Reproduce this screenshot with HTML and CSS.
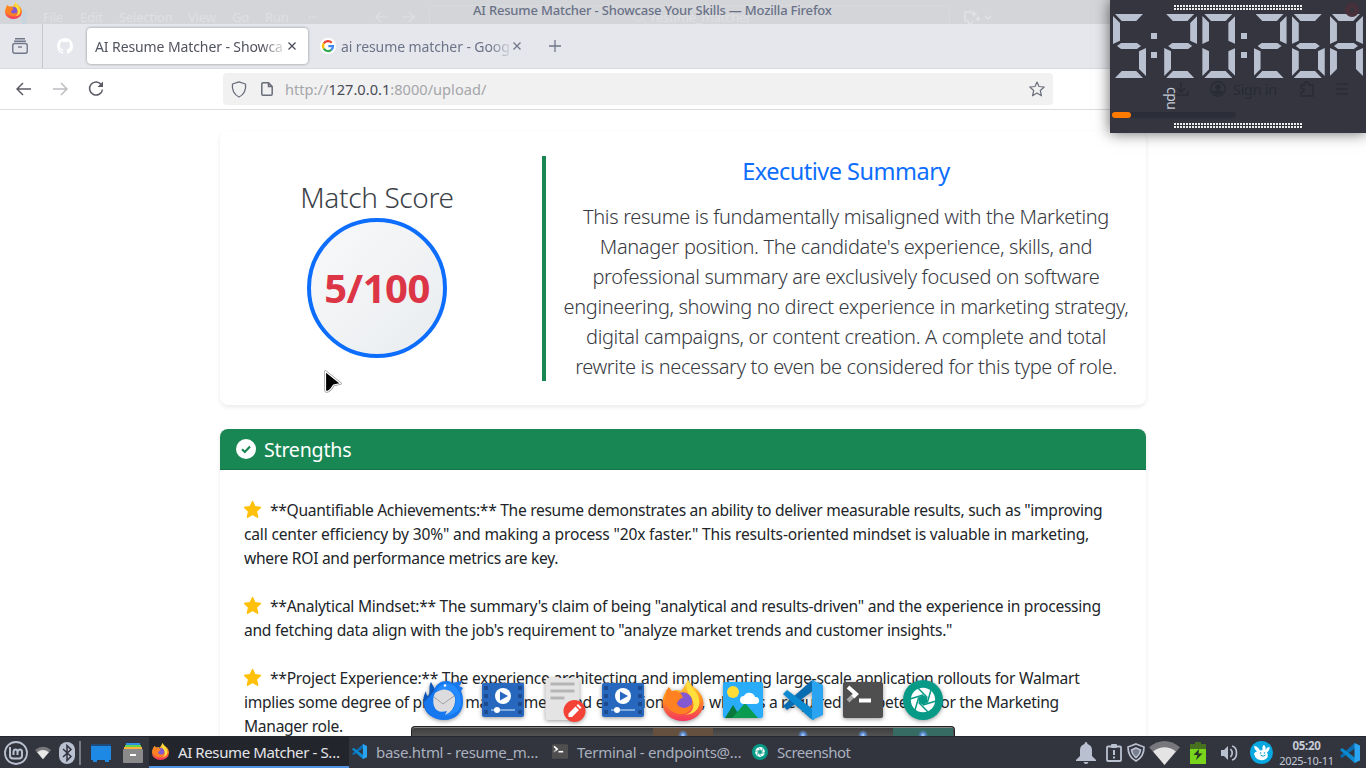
FILE: index.html
```
<!DOCTYPE html>
<html lang="en">
<head>
<meta charset="utf-8">
<title>AI Resume Matcher - Showcase Your Skills</title>
<link rel="stylesheet" href="styles.css">
</head>
<body>
<svg class="defs" width="0" height="0">
  <defs>
    <linearGradient id="fx" x1="0" y1="0" x2="0" y2="1"><stop offset="0" stop-color="#ffde3a"/><stop offset=".5" stop-color="#ff8a20"/><stop offset="1" stop-color="#f43460"/></linearGradient>
    <symbol id="firefox" viewBox="0 0 40 40">
      <path d="M25 0C27 4 29 6 32 8C37 12 40 17 40 23A20 17 0 0 1 0 23C0 17 2 13 4 10C5 9 6 8 6 7C8 8 8 9 9 11C12 10 15 9 18 11C20 9 22 5 25 0Z" fill="url(#fx)"/>
      <path d="M25 0C25 7 35 10 36 20C37 28 30 34 22 34C31 32 32 23 28 17C24 12 22 8 25 0Z" fill="#ffdf3d"/>
      <circle cx="20" cy="21" r="9" fill="#8458d0"/>
      <path d="M4 10L6 7L9 11C14 10 18 12 20 17C17 18 15 20 14 23C16 28 23 29 28 24C28 31 22 35 15 33C5 30 0 23 4 10Z" fill="#ff8122"/>
    </symbol>
    <symbol id="vscode" viewBox="0 0 40 40">
      <path d="M0 26L4 30L31 10V0L28 1Z" fill="#0a6cb0"/>
      <path d="M0 14L4 10L31 30V40L28 39Z" fill="#0b8ad2"/>
      <path d="M29 0L40 5V35L29 40Z" fill="#2aa4f0"/>
    </symbol>
    <symbol id="term" viewBox="0 0 40 36">
      <rect width="40" height="36" rx="2" fill="#4f4f4f"/>
      <path d="M5 19L12 12" stroke="#aaa" stroke-width="4"/>
      <path d="M5 5L13 12L10 15" stroke="#fff" stroke-width="4" fill="none"/>
      <path d="M16 18.500H28" stroke="#fff" stroke-width="4"/>
    </symbol>
    <symbol id="shot" viewBox="0 0 40 40">
      <circle cx="20" cy="20" r="20" fill="#079a87"/>
      <circle cx="20" cy="20" r="12.200" fill="#fff"/>
      <path d="M20 15L24.300 17.500V22.500L20 25L15.700 22.500V17.500Z" fill="#079a87"/>
      <path d="M24.300 17.500L15 8M24.300 22.500L28 10M20 25L33 21M15.700 22.500L25 32M15.700 17.500L12 30M20 15L7 19" stroke="#079a87" stroke-width="1.500"/>
    </symbol>
    <symbol id="video" viewBox="0 0 42 34">
      <rect width="42" height="34" rx="2" fill="#2768be"/>
      <path d="M4 3V33M38 3V33" stroke="#1c4c8f" stroke-width="4" stroke-dasharray="4 4"/>
      <circle cx="21" cy="13" r="8" fill="#fff"/>
      <path d="M18 8.500L26 13L18 17.500Z" fill="#2768be"/>
      <path d="M9 27H33" stroke="#9fc0e8" stroke-width="1.500"/><circle cx="15" cy="27" r="3" fill="#fff"/>
    </symbol>
    <symbol id="star" viewBox="0 0 16 16"><path d="M8 .2L10.300 5.200L16 5.900L11.800 9.700L13 15.500L8 12.700L3 15.500L4.200 9.700L0 5.900L5.700 5.200Z" stroke="#ffc107" stroke-linejoin="round" fill="#ffc107"/></symbol>
    <symbol id="back" viewBox="0 0 16 14"><path d="M1 7H15M7 1L1 7L7 13" fill="none" stroke="currentColor" stroke-width="1.500"/></symbol>
  </defs>
</svg>

<div class="desktop">
  <header class="titlebar">
    <div class="ghost">
      <span class="gm g1">File</span><span class="gm g2">Edit</span><span class="gm g3">Selection</span><span class="gm g4">View</span><span class="gm g5">Go</span><span class="gm g6">Run</span><span class="gm g7">···</span>
      <svg class="garrows" width="40" height="12" viewBox="0 0 40 12"><path d="M1 6H13M6 1L1 6L6 11M27 6H39M34 1L39 6L34 11" fill="none" stroke="#e0e0e3" stroke-width="1.200"/></svg>
      <span class="gbox"></span>
      <svg class="gsearch" width="14" height="14" viewBox="0 0 14 14"><circle cx="5.500" cy="5.500" r="4.500" fill="none" stroke="#dddee1"/><path d="M9 9L13 13" stroke="#dddee1"/></svg>
      <span class="gm g8">resume_matcher</span>
      <svg class="gcop" width="30" height="15" viewBox="0 0 30 15"><path d="M8 2H1V11H4L5 15L9 11M21 6L24 9L27 6" fill="none" stroke="#e1e2e5" stroke-width="1.500"/><path d="M10 0L11 3L14 4L11 5L10 8L9 5L6 4L9 3ZM14 6L15 8L17 9L15 10L14 12L13 10L11 9L13 8Z" fill="#e1e2e5"/></svg>
      <svg class="gcode" width="17" height="16" viewBox="0 0 40 40"><path d="M29 0L40 5V35L29 40V12L4 30L0 26" fill="#c6d4e0"/></svg>
    </div>
    <svg class="tfox" width="17" height="17"><use href="#firefox"/></svg>
    <span class="wtitle">AI Resume Matcher - Showcase Your Skills — Mozilla Firefox</span>
  </header>

  <nav class="tabs">
    <div class="tabview"><svg width="16" height="16" viewBox="0 0 16 16" fill="none" stroke="#70778b" stroke-width="1.400"><path d="M3 .8H13M2 3.200H14"/><rect x=".8" y="5.500" width="14.400" height="9.700" rx="1.800"/><path d="M6 9H10"/></svg></div>
    <div class="pinned"><svg width="16" height="16" viewBox="0 0 16 16" fill="#fff"><path d="M8 0C3.580 0 0 3.580 0 8c0 3.540 2.290 6.530 5.470 7.590.4.070.55-.17.55-.38 0-.19-.01-.82-.01-1.490-2.010.37-2.530-.49-2.690-.94-.09-.23-.48-.94-.82-1.130-.28-.15-.68-.52-.01-.53.630-.01 1.080.58 1.230.82.720 1.210 1.870.87 2.330.66.070-.52.280-.87.510-1.070-1.780-.2-3.640-.89-3.640-3.950 0-.87.310-1.590.82-2.150-.08-.2-.36-1.020.08-2.120 0 0 .67-.21 2.200.82a7.600 7.600 0 0 1 4 0c1.530-1.040 2.200-.82 2.200-.82.440 1.100.16 1.920.08 2.120.51.560.82 1.270.82 2.150 0 3.070-1.870 3.750-3.650 3.950.29.250.54.730.54 1.480 0 1.070-.01 1.930-.01 2.200 0 .21.150.46.550.38A8 8 0 0 0 16 8c0-4.420-3.580-8-8-8z"/></svg></div>
    <div class="tab active"><span class="tt">AI Resume Matcher - Showca</span><svg width="8" height="8" viewBox="0 0 8 8"><path d="M.5 .5L7.500 7.500M7.500 .5L.5 7.500" stroke="#494d5a" stroke-width="1.300"/></svg></div>
    <div class="tab"><svg class="goog" width="16" height="16" viewBox="0 0 16 16"><circle cx="8" cy="8" r="8" fill="#fff"/><g fill="none" stroke-width="2.200"><path d="M11.700 4.700A5 5 0 0 0 3.800 5.300" stroke="#ea4335"/><path d="M3.800 5.300A5 5 0 0 0 3.800 10.700" stroke="#fbbc05"/><path d="M3.800 10.700A5 5 0 0 0 11.300 11.800" stroke="#34a853"/><path d="M11.300 11.800A5 5 0 0 0 13 8.200H8.300" stroke="#4285f4"/></g></svg><span class="tt t2">ai resume matcher - Goog</span><svg width="8" height="8" viewBox="0 0 8 8"><path d="M.5 .5L7.500 7.500M7.500 .5L.5 7.500" stroke="#70778b" stroke-width="1.300"/></svg></div>
    <svg class="plus" width="12" height="12" viewBox="0 0 12 12"><path d="M6 0V12M0 6H12" stroke="#70778b" stroke-width="1.300"/></svg>
  </nav>

  <div class="navbar">
    <svg class="nb" width="16" height="14"><use href="#back"/></svg>
    <svg class="nf" width="16" height="14"><use href="#back"/></svg>
    <svg class="nr" width="16" height="16" viewBox="0 0 16 16"><path d="M13.500 4A6.500 6.500 0 1 0 14.500 8.500" fill="none" stroke="#5b5b66" stroke-width="1.500"/><path d="M15 .5V6H9.500Z" fill="#5b5b66"/></svg>
    <div class="url">
      <svg width="16" height="17" viewBox="0 0 16 17" fill="none" stroke="#696d7b" stroke-width="1.300"><path d="M8 .8L14.500 3C15.500 9 12.500 14 8 16C3.500 14 .5 9 1.500 3Z" stroke-linejoin="round"/></svg>
      <svg class="page" width="12" height="14" viewBox="0 0 12 14"><path d="M.8 2Q.8 .8 2 .8H7.500L11.200 4.500V12Q11.200 13.200 10 13.200H2Q.8 13.200 .8 12ZM7.500 .8V4.500H11.200" fill="none" stroke="#696d7b" stroke-width="1.500"/></svg>
      <span class="addr">http://<b>127.0.0.1</b>:8000/upload/</span>
      <svg class="fav" width="16" height="16" viewBox="0 0 16 16"><path d="M8 1L10 5.500L15.200 6L11.300 9.500L12.500 14.800L8 12L3.500 14.800L4.700 9.500L.8 6L6 5.500Z" fill="none" stroke="#6c6f7c" stroke-width="1.200" stroke-linejoin="round"/></svg>
    </div>
  </div>

  <main class="content">
    <section class="card score">
      <div class="left"><h3>Match Score</h3><div class="ring">5/100</div></div>
      <div class="right">
        <h4>Executive Summary</h4>
        <p><span class="s1">This resume is fundamentally misaligned with the Marketing</span><span class="s2">Manager position. The candidate's experience, skills, and</span><span class="s3">professional summary are exclusively focused on software</span><span class="s4">engineering, showing no direct experience in marketing strategy,</span><span class="s5">digital campaigns, or content creation. A complete and total</span><span class="s6">rewrite is necessary to even be considered for this type of role.</span></p>
      </div>
    </section>
    <section class="card strengths">
      <h5><svg width="20" height="20" viewBox="0 0 20 20"><circle cx="10" cy="10" r="10" fill="#fff"/><path d="M6 10.200L8.800 13L14 7.500" fill="none" stroke="#198754" stroke-width="2.200"/></svg>Strengths</h5>
      <ul>
        <li><span><svg width="17" height="17"><use href="#star"/></svg>**Quantifiable Achievements:** The resume demonstrates an ability to deliver measurable results, such as "improving</span><span class="wide">call center efficiency by 30%" and making a process "20x faster." This results-oriented mindset is valuable in marketing,</span><span>where ROI and performance metrics are key.</span></li>
        <li><span class="mid"><svg width="17" height="17"><use href="#star"/></svg>**Analytical Mindset:** The summary's claim of being "analytical and results-driven" and the experience in processing</span><span class="mid">and fetching data align with the job's requirement to "analyze market trends and customer insights."</span></li>
        <li><span class="proj"><svg width="17" height="17"><use href="#star"/></svg>**Project Experience:** The experience architecting and implementing large-scale application rollouts for Walmart</span><span>implies some degree of project management and execution skills, which is a required competency for the Marketing</span><span>Manager role.</span></li>
      </ul>
    </section>
  </main>

  <footer class="taskbar">
    <svg class="mint" width="24" height="24" viewBox="0 0 24 24" fill="none" stroke="#b9c1d0"><circle cx="12" cy="12" r="11" stroke-width="1.800"/><path d="M6 6V14.500Q6 17.500 9 17.500H15Q18 17.500 18 14.500V11Q18 8.500 16 8.500T13.500 11V14M13.500 11Q13.500 8.500 11.500 8.500T9.500 11V14" stroke-width="2"/></svg>
    <svg class="wifi1" width="16" height="14" viewBox="0 0 30 23"><path d="M0 6Q15 -6 30 6L15 23Z" fill="#77777c"/><path d="M4 10Q15 2 26 10L15 23Z" fill="#e8e8e8"/></svg>
    <svg class="bt" width="16" height="22" viewBox="0 0 16 22"><rect width="16" height="22" rx="8" fill="#b9c1d0"/><path d="M4 7L12 14.500L8 18.500V3.500L12 7.500L4 15" fill="none" stroke="#30323d" stroke-width="1.500"/></svg>
    <span class="sep"></span>
    <svg class="desk" width="20" height="18" viewBox="0 0 20 18"><path d="M0 0H20V16H18V18H14V16H6V18H2V16H0Z" fill="#1e88e5"/><path d="M0 0H20V2H0Z" fill="#1d4b7c"/></svg>
    <svg class="files" width="20" height="20" viewBox="0 0 20 20"><path d="M3 0H17V2H3Z" fill="#2f8fe6"/><path d="M2 2H18V4H2Z" fill="#5fd44e"/><path d="M1 4H19V6H1Z" fill="#ffb13b"/><rect y="6" width="20" height="14" rx="1" fill="#8a8a8a"/><path d="M7 12H13" stroke="#fff" stroke-width="2"/></svg>
    <div class="task on"><svg width="17" height="17"><use href="#firefox"/></svg><span>AI Resume Matcher - S…</span></div>
    <div class="task"><svg width="15" height="15"><use href="#vscode"/></svg><span class="k2">base.html - resume_m…</span></div>
    <div class="task"><svg width="16" height="15"><use href="#term"/></svg><span class="k3">Terminal - endpoints@…</span></div>
    <div class="task"><svg width="16" height="16"><use href="#shot"/></svg><span class="k4">Screenshot</span></div>
    <div class="tray">
      <svg class="bell" width="22" height="22" viewBox="0 0 22 22"><path d="M11 0Q12.500 0 12.500 2Q17 3.500 17 8V14L21 18V19H1V18L5 14V8Q5 3.500 9.500 2Q9.500 0 11 0ZM8.500 20H13.500Q13 22 11 22T8.500 20Z" fill="#b9c1d0"/></svg>
      <svg class="clip" width="16" height="18" viewBox="0 0 16 18"><rect x="1" y="2.500" width="14" height="14.500" rx="1" fill="none" stroke="#b9c1d0" stroke-width="1.800"/><rect x="5" width="6" height="4" rx="1" fill="#b9c1d0"/><path d="M8 6V11M8 12.500V14.500" stroke="#b9c1d0" stroke-width="2"/></svg>
      <svg class="shield" width="18" height="19" viewBox="0 0 18 19" fill="none" stroke="#b9c1d0" stroke-width="1.700"><path d="M9 1L17 4Q17 14 9 18Q1 14 1 4Z"/><path d="M9 5L13.500 7Q13 11.500 9 14.500Q5 11.500 4.500 7Z" fill="#777f8e"/></svg>
      <svg class="wifi2" width="31" height="24" viewBox="0 0 30 23"><path d="M0 6Q15 -6 30 6L15 23Z" fill="#77777c"/><path d="M4 10Q15 2 26 10L15 23Z" fill="#e4e4e4"/></svg>
      <svg class="batt" width="16" height="22" viewBox="0 0 16 22"><path d="M5 0H11V2H16V22H0V2H5Z" fill="#477021"/><path d="M0 7H16V22H0Z" fill="#78d51b"/><path d="M9 7L3.500 13H7.500L6 18L12.500 11.500H8.500Z" fill="#273324"/></svg>
      <svg class="vol" width="17" height="16" viewBox="0 0 17 16"><path d="M0 5H3L7 1V15L3 11H0Z" fill="#b9c1d0"/><path d="M9.500 4Q13 8 9.500 12M11 1Q15.500 2 15.500 8T11 15" fill="none" stroke="#b9c1d0" stroke-width="1.700"/></svg>
      <svg class="bun" width="23" height="23" viewBox="0 0 23 23"><circle cx="11.500" cy="11.500" r="11.500" fill="#08a7df"/><path d="M4 5Q8 5 10 9.500L12.500 9Q12 4.500 14 4Q16 5 15.500 9Q17 5.500 19.500 6Q20 9 17 11.500Q19 15 16.500 17.500Q14 20 10 19Q5 18 4 12.500Q5 11 7 10.500Q4 8 4 5Z" fill="#fff"/><path d="M10.500 14Q13 16.500 15.500 14" stroke="#08a7df" fill="none"/><circle cx="10.500" cy="12" r=".8" fill="#08a7df"/><circle cx="14.500" cy="12" r=".8" fill="#08a7df"/></svg>
      <div class="clock"><b>05:20</b><span>2025-10-11</span></div>
      <svg class="tcode" width="20" height="20"><use href="#vscode"/></svg>
    </div>
  </footer>

  <div class="dock">
    <div class="icons">
      <svg width="40" height="40" viewBox="0 0 40 40"><path d="M8 2C5 7 8 12 5 16Q3 15 3 11C-2 20 0 31 8 36L18 20Z" fill="#0d57b8"/><path d="M11 11C13 1 25-1 29 3L39 1Q38 5 36 6L40 8L38 11Q40 15 40 22C40 32 33 40 21 40C10 40 1 33 1 22L7 16Z" fill="#1677ef"/><path d="M13 11Q19 0 30 5Q38 10 38 22Q38 34 22 36Q30 32 32 25Q35 14 27 11Q20 8 13 11Z" fill="#248aff"/><path d="M12 13Q20 7 27 11Q33 15 32 22Q31 31 22 35L24 31Q14 34 11 26Q9 19 12 13Z" fill="#dcdcde"/><path d="M11 17L20 24L31 16" fill="none" stroke="#a0a0a4" stroke-width="1"/><circle cx="22" cy="5.500" r="1.300" fill="#fff"/></svg>
      <svg width="42" height="34"><use href="#video"/></svg>
      <svg class="edit" width="40" height="44" viewBox="0 0 40 44"><rect width="34" height="42" rx="2" fill="#e4e4e4"/><path d="M5 6H29M5 13H29M5 20H19" stroke="#b5b5b5" stroke-width="3"/><circle cx="29" cy="33" r="11" fill="#f44336"/><path d="M23 39V35.500L30 28.500L33.500 32L26.500 39ZM31 27.500L32.500 26L36 29.500L34.500 31Z" fill="#fff"/></svg>
      <svg width="42" height="34"><use href="#video"/></svg>
      <svg width="41" height="41"><use href="#firefox"/></svg>
      <svg width="40" height="36" viewBox="0 0 40 36"><rect width="40" height="36" rx="2" fill="#29adfa"/><circle cx="10" cy="10" r="6" fill="#fddc36"/><path d="M2 36L10 23L18 36Z" fill="#08783e"/><path d="M9 36L22 21L35 36Z" fill="#0b9c51"/><path d="M21 22A4 4 0 0 1 21 14A6 6 0 0 1 32 15A3.500 3.500 0 0 1 33 22Z" fill="#fff"/></svg>
      <svg width="40" height="40"><use href="#vscode"/></svg>
      <svg width="40" height="36"><use href="#term"/></svg>
      <svg width="40" height="40"><use href="#shot"/></svg>
    </div>
    <div class="shelf"><i class="o"></i><i></i><i></i><i></i><i class="g"></i></div>
  </div>

  <aside class="widget">
    <div class="dots"></div>
    <div class="led" aria-label="5:20:26A">
      <div class="dg"><i class="a"></i><i class="f"></i><i class="g"></i><i class="c"></i><i class="d"></i></div>
      <div class="cl"></div>
      <div class="dg"><i class="a"></i><i class="b"></i><i class="g"></i><i class="e"></i><i class="d"></i></div>
      <div class="dg"><i class="a"></i><i class="b"></i><i class="c"></i><i class="d"></i><i class="e"></i><i class="f"></i></div>
      <div class="cl"></div>
      <div class="dg"><i class="a"></i><i class="b"></i><i class="g"></i><i class="e"></i><i class="d"></i></div>
      <div class="dg"><i class="a"></i><i class="c"></i><i class="d"></i><i class="e"></i><i class="f"></i><i class="g"></i></div>
      <div class="dg"><i class="a"></i><i class="b"></i><i class="c"></i><i class="e"></i><i class="f"></i><i class="g"></i></div>
    </div>
    <div class="under">
      <svg width="16" height="16" viewBox="0 0 16 16" fill="none" stroke="#282a33" stroke-width="1.500"><path d="M8 1V11M4 7L8 11L12 7M1 10V14H15V10"/></svg>
      <svg class="usr" width="16" height="16" viewBox="0 0 16 16" fill="none" stroke="#282a33" stroke-width="1.500"><circle cx="8" cy="8" r="7.200"/><circle cx="8" cy="6" r="2" fill="#282a33"/><path d="M4 11Q8 9 12 11Q8 15 4 11Z" fill="#282a33"/></svg>
      <span>Sign in</span>
      <svg class="ext" width="14" height="16" viewBox="0 0 14 16" fill="none" stroke="#282a33" stroke-width="1.500"><path d="M1 4H4Q4 1 6.500 1T9 4H13V15H1V11Q4 11 4 9T1 7Z"/></svg>
      <svg class="ham" width="12" height="12" viewBox="0 0 12 12"><path d="M0 1H12M0 6H12M0 11H12" stroke="#282a33" stroke-width="1.300"/></svg>
    </div>
    <span class="cpu">cpu</span>
    <div class="meter"><i></i></div>
    <div class="dots low"></div>
    <svg class="xx" width="14" height="14" viewBox="0 0 14 14"><circle cx="7" cy="7" r="7" fill="#4a303b"/><path d="M4.500 4.500L9.500 9.500M9.500 4.500L4.500 9.500" stroke="#34353f" stroke-width="1.500"/></svg>
  </aside>

  <svg class="cursor" width="18" height="24" viewBox="0 0 18 24"><path d="M1.500 1.500L16.500 13.500L9.500 15Q6 21 2.500 21.500Q1.500 21 1.500 20Z" fill="#000" stroke="#999" stroke-width="2.600" stroke-linejoin="round"/><path d="M1.500 1.500L16.500 13.500L9.500 15Q6 21 2.500 21.500Q1.500 21 1.500 20Z" fill="#000" stroke="#fff" stroke-width="1.200" stroke-linejoin="round"/></svg>
</div>
</body>
</html>
```
FILE: styles.css
```
* { box-sizing: border-box; }
body { margin: 0; font-family: "Noto Sans", sans-serif; overflow: hidden; background: #fff; }
svg { display: block; flex: none; }
.defs { position: absolute; }
.desktop { position: relative; width: 1366px; height: 768px; overflow: hidden; display: flex; flex-direction: column; }

.titlebar { position: relative; flex: none; height: 24px; background: #d4d5d9; overflow: hidden; }
.tfox { position: absolute; left: 5px; top: 2px; }
.wtitle { position: absolute; left: 473px; top: 1px; font-size: 13px; font-weight: 500; line-height: 19px; color: #697187; white-space: nowrap; letter-spacing: -.19px; }
.gm { position: absolute; top: 8px; font-size: 13px; line-height: 18px; color: #dfe0e3; white-space: nowrap; letter-spacing: -.2px; }
.g1 { left: 43px; } .g2 { left: 80px; } .g3 { left: 119px; } .g4 { left: 188px; } .g5 { left: 232px; } .g6 { left: 265px; } .g7 { left: 308px; } .g8 { left: 651px; }
.garrows { position: absolute; left: 375px; top: 11px; }
.gbox { position: absolute; left: 429px; top: 5px; width: 521px; height: 30px; border: 1px solid #d9dadd; border-radius: 5px; }
.gsearch { position: absolute; left: 633px; top: 11px; }
.gcop { position: absolute; left: 964px; top: 10px; }
.gcode { position: absolute; left: 10px; top: 9px; }

.tabs { flex: none; height: 45px; background: #e6e7ec; border-bottom: 1px solid #d8d9de; display: flex; align-items: center; font-size: 14px; color: #6c7489; }
.tabview { width: 43px; height: 44px; border-right: 1px solid #c6c7cd; padding: 14px 0 0 12px; }
.pinned { width: 43px; padding-left: 14px; }
.tab { display: flex; align-items: center; width: 221px; height: 36px; border-radius: 4px; padding-left: 8px; margin: 0 3px 0 1px; }
.tab.active { background: #fff; color: #51535f; box-shadow: 0 0 3px rgba(0,0,0,.4); }
.tt { width: 189px; margin-right: 4px; padding-top: 1px; overflow: hidden; white-space: nowrap; line-height: 20px; letter-spacing: -.1px; -webkit-mask-image: linear-gradient(90deg, #000 88%, transparent 102%); mask-image: linear-gradient(90deg, #000 88%, transparent 102%); }
.goog { margin-right: 5px; }
.t2 { width: 169px; margin-right: 3px; }
.plus { margin-left: 13px; }

.navbar { flex: none; height: 41px; background: #fff; border-bottom: 1px solid #dddde0; display: flex; align-items: center; color: #5b5b66; }
.nb { margin-left: 16px; }
.nf { margin-left: 20px; color: #bdbdc2; transform: scaleX(-1); }
.nr { margin-left: 20px; }
.url { margin-left: 119px; width: 830px; height: 32px; border-radius: 4px; background: #f1f1f1; display: flex; align-items: center; padding-left: 8px; }
.page { margin-left: 14px; }
.addr { margin-left: 12px; font-size: 14.600px; color: #a5a6aa; letter-spacing: .01px; }
.addr b { font-weight: 400; color: #494b57; }
.fav { margin-left: auto; margin-right: 8px; }

.content { flex: 1; min-height: 0; overflow: hidden; padding: 21px 220px 0; background: #fff; }
.card { border-radius: 8px; background: #fff; box-shadow: 0 2px 4px rgba(0,0,0,.085); }
.score { height: 274px; padding: 25px 0 24px; display: flex; }
.left { width: 322px; padding-right: 8px; display: flex; flex-direction: column; align-items: center; padding-top: 25px; }
.left h3 { margin: 0; font-weight: 300; font-size: 28px; line-height: 32px; height: 37px; color: #3c4248; white-space: nowrap; letter-spacing: -.35px; }
.ring { width: 140px; height: 140px; border: 4px solid #0d6efd; border-radius: 50%; background: linear-gradient(135deg, #f8f9fa, #e9ecef); color: #dc3545; font-weight: 700; font-size: 40px; display: flex; align-items: center; justify-content: center; letter-spacing: -.5px; padding-bottom: 2px; }
.right { flex: 1; border-left: 4px solid #198754; text-align: center; }
.right h4 { margin: 0 0 17px; font-size: 23.500px; line-height: 30px; height: 29px; font-weight: 400; color: #0d6efd; white-space: nowrap; letter-spacing: -.5px; }
.right p { margin: 0; font-size: 20px; font-weight: 300; line-height: 30px; color: #373a3f; }
.right p span { display: block; white-space: nowrap; }
.s1 { letter-spacing: -.32px; } .s2 { letter-spacing: -.35px; } .s3 { letter-spacing: -.32px; }
.s4 { letter-spacing: -.37px; } .s5 { letter-spacing: -.35px; } .s6 { letter-spacing: -.37px; }
.strengths { margin-top: 24px; height: 400px; }
.strengths h5 { margin: 0; height: 41px; background: #198754; border-bottom: 1px solid #157347; border-radius: 8px 8px 0 0; color: #fff; font-weight: 400; font-size: 19.600px; letter-spacing: -.22px; display: flex; align-items: center; gap: 8px; padding-left: 16px; }
.strengths ul { list-style: none; margin: 0; padding: 28px 24px 0; font-size: 15.600px; line-height: 24px; color: #212529; }
.strengths li { margin-bottom: 24px; }
.strengths li span { display: block; height: 24px; white-space: nowrap; letter-spacing: -.3px; }
.strengths li .wide { letter-spacing: -.18px; }
.strengths li .mid { letter-spacing: -.275px; }
.strengths li .proj { letter-spacing: -.26px; }
.strengths li svg { display: inline-block; vertical-align: -2px; margin-right: 9px; }

.taskbar { flex: none; height: 32px; background: #32343e; border-top: 1px solid #242630; display: flex; align-items: center; font-size: 15px; color: #aab1bf; }
.mint { margin-left: 4px; }
.wifi1 { margin-left: 7px; }
.bt { margin-left: 8px; }
.sep { width: 2px; height: 24px; background: #777b85; margin-left: 4px; }
.desk { margin-left: 10px; }
.files { margin-left: 12px; }
.task { width: 200px; height: 31px; display: flex; align-items: center; gap: 9px; padding: 0 0 2px 3px; white-space: nowrap; letter-spacing: -.3px; }
.task.on { margin-left: 6px; background: #23252d; border-bottom: 2px solid #5294e2; padding-bottom: 0; color: #e6e6e8; letter-spacing: -.4px; }
.k3 { letter-spacing: -.27px; } .k4 { letter-spacing: -.5px; }
.tray { margin-left: auto; display: flex; align-items: center; }
.tray .clip { margin-left: 9px; } .tray .shield { margin-left: 5px; } .tray .wifi2 { margin-left: 4px; } .tray .batt { margin-left: 10px; } .tray .vol { margin-left: 15px; } .tray .bun { margin-left: 12px; }
.clock { width: 55px; margin-left: 6px; display: flex; flex-direction: column; align-items: center; color: #c5cbd6; font-size: 11px; line-height: 15px; letter-spacing: -.3px; }
.clock b { font-size: 11.500px; }
.tcode { margin: 0 6px; }

.dock { position: absolute; left: 411px; top: 678px; width: 544px; height: 58px; }
.icons { position: relative; display: flex; width: 544px; padding: 0 2px; height: 44px; align-items: center; z-index: 1; }
.icons svg { width: 60px; filter: drop-shadow(0 1px 2px rgba(0,0,0,.4)); }
.icons .edit { padding-left: 5px; }
.shelf { height: 10px; margin-top: 4px; border: 1px solid #222; border-bottom: 0; border-radius: 4px 4px 0 0; background: linear-gradient(#3c3c3c, #525252); box-shadow: inset 0 1px #888; display: flex; padding: 1px 1px 0 241px; }
.shelf i { width: 60px; background: radial-gradient(circle at 50% 7px, #c3dcff 0, #5c8ed8 2px, transparent 5px); }
.shelf i:nth-child(2) { background: none; }
.shelf .o { background-color: #65503f; } .shelf .g { background-color: #356b62; }

.widget { position: absolute; left: 1110px; top: 0; width: 256px; height: 133px; background: #34353f; box-shadow: 0 0 14px rgba(0,0,0,.6); overflow: visible; }
.dots { position: absolute; left: 64px; top: 5px; width: 128px; height: 5px; background: repeating-linear-gradient(90deg, transparent 0 2px, #34353f 2px 3px), linear-gradient(#eee 0 2px, transparent 2px 3px, #eee 3px 5px); }
.dots.low { top: 123px; }
.led { position: absolute; left: 3px; top: 14px; display: flex; }
.dg { position: relative; width: 32.500px; height: 64px; margin-right: 5.700px; }
.dg i { position: absolute; background: #b9c1d0; }
.dg .a { left: 2px; top: 0; width: 28px; height: 7px; clip-path: polygon(0 0,100% 0,76% 100%,24% 100%); }
.dg .d { left: 2px; top: 57px; width: 28px; height: 7px; clip-path: polygon(24% 0,76% 0,100% 100%,0 100%); }
.dg .g { left: 4px; top: 29px; width: 24px; height: 6px; clip-path: polygon(17% 0,83% 0,100% 50%,83% 100%,17% 100%,0 50%); }
.dg .f, .dg .e { left: 0; width: 7px; height: 28px; }
.dg .b, .dg .c { left: 26px; width: 7px; height: 28px; }
.dg .f, .dg .b { top: 2px; } .dg .e, .dg .c { top: 34px; }
.dg .f { clip-path: polygon(0 0,100% 25%,100% 88%,0 100%); }
.dg .b { clip-path: polygon(100% 0,0 25%,0 88%,100% 100%); }
.dg .e { clip-path: polygon(0 0,100% 12%,100% 75%,0 100%); }
.dg .c { clip-path: polygon(100% 0,0 12%,0 75%,100% 100%); }
.cl { width: 6px; height: 25px; margin: 19px 7px 0 0; background: linear-gradient(#b9c1d0 0 6px, transparent 6px 19px, #b9c1d0 19px); }
.under { position: absolute; left: 63px; top: 80px; height: 18px; display: flex; align-items: center; font-size: 14.500px; letter-spacing: -.3px; color: #282a33; white-space: nowrap; opacity: .85; }
.usr { margin: 0 7px 0 21px; } .ext { margin-left: 23px; } .ham { margin-left: 22px; }
.cpu { position: absolute; left: 54px; top: 87px; writing-mode: vertical-rl; font-size: 14px; line-height: 16px; letter-spacing: -.5px; color: #c3c9d5; }
.meter { position: absolute; left: 2px; top: 112px; width: 124px; height: 6px; border-radius: 3px; background: #2b2d38; }
.meter i { display: block; width: 19px; height: 6px; border-radius: 3px; background: #ff7b00; }
.xx { position: absolute; left: 235px; top: 3px; }
.cursor { position: absolute; left: 324px; top: 370px; }
```
